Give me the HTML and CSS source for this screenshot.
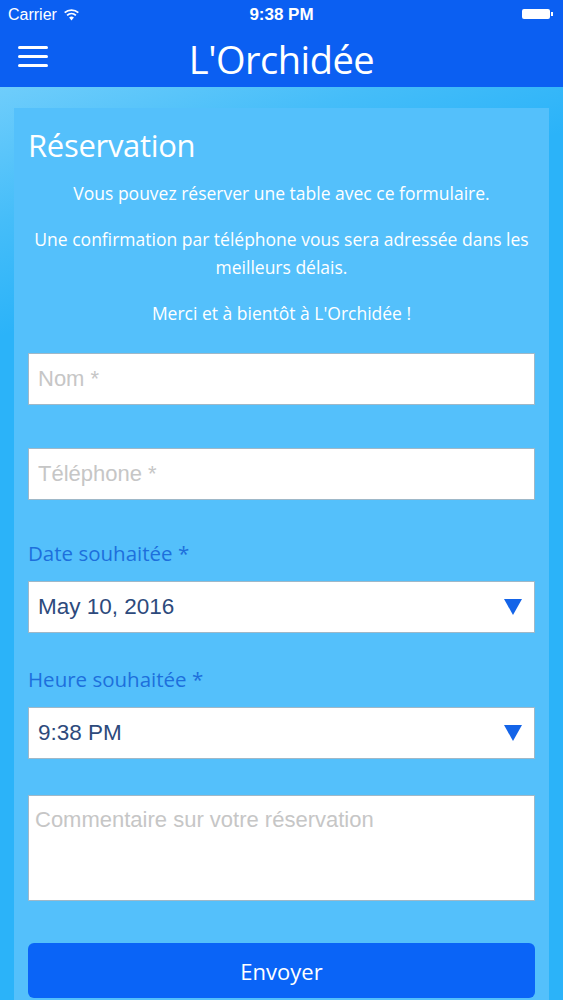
FILE: index.html
```html
<!DOCTYPE html>
<html lang="fr">
<head>
    <meta charset="UTF-8">
    <meta name="viewport" content="width=device-width, initial-scale=1.0">
    <title>L'Orchidée - Réservation</title>
    <link rel="stylesheet" href="styles.css">
</head>
<body>
    <div class="statusbar">
        <div class="carrier">
            Carrier
            <svg class="wifi" width="17" height="12" viewBox="0 0 16 12">
                <path d="M8 11.5 L5.6 8.6 A3.8 3.8 0 0 1 10.4 8.6 Z" fill="#fff"/>
                <path d="M3.6 6.4 A6.6 6.6 0 0 1 12.4 6.4" stroke="#fff" stroke-width="1.8" fill="none"/>
                <path d="M1.2 3.7 A10 10 0 0 1 14.8 3.7" stroke="#fff" stroke-width="1.8" fill="none"/>
            </svg>
        </div>
        <div class="clock">9:38 PM</div>
        <div class="battery"><span class="battery-body"></span><span class="battery-nub"></span></div>
    </div>

    <header class="topbar">
        <div class="menu">
            <span></span><span></span><span></span>
        </div>
        <h1>L'Orchidée</h1>
    </header>

    <main class="page">
        <div class="panel">
            <h2>Réservation</h2>
            <p>Vous pouvez réserver une table avec ce formulaire.</p>
            <p>Une confirmation par téléphone vous sera adressée dans les meilleurs délais.</p>
            <p>Merci et à bientôt à L'Orchidée !</p>

            <input class="field field-name" type="text" placeholder="Nom *">
            <input class="field field-phone" type="text" placeholder="Téléphone *">

            <label class="field-label">Date souhaitée *</label>
            <div class="field picker">
                <span>May 10, 2016</span>
                <svg width="18" height="16" viewBox="0 0 18 16"><path d="M0 0 H18 L9 16 Z" fill="#1464e8"/></svg>
            </div>

            <label class="field-label">Heure souhaitée *</label>
            <div class="field picker">
                <span>9:38 PM</span>
                <svg width="18" height="16" viewBox="0 0 18 16"><path d="M0 0 H18 L9 16 Z" fill="#1464e8"/></svg>
            </div>

            <textarea class="field comment" placeholder="Commentaire sur votre réservation"></textarea>

            <button class="send">Envoyer</button>
        </div>
    </main>
</body>
</html>
```

FILE: styles.css
```css
body {
    margin: 0;
    font-family: "Open Sans", sans-serif;
    background-color: #2bb3f9;
}
.statusbar {
    height: 30px;
    background-color: #0b5ff2;
    color: #fff;
    font-family: "Liberation Sans", Arial, sans-serif;
    font-size: 16px;
    display: flex;
    align-items: center;
    justify-content: space-between;
    padding: 0 10px 0 8px;
    position: relative;
}
.carrier {
    display: flex;
    align-items: center;
    gap: 6px;
}
.clock {
    position: absolute;
    left: 0;
    right: 0;
    text-align: center;
    font-size: 17px;
    font-weight: bold;
}
.battery {
    display: flex;
    align-items: center;
    margin-top: -2px;
}
.battery-body {
    width: 28px;
    height: 10px;
    background: #fff;
    border-radius: 2px;
}
.battery-nub {
    width: 2px;
    height: 4px;
    background: #fff;
    margin-left: 1px;
}
.topbar {
    height: 57px;
    background-color: #0b5ff2;
    display: flex;
    align-items: center;
    justify-content: center;
    position: relative;
}
.menu {
    position: absolute;
    left: 18px;
    top: 16px;
    display: flex;
    flex-direction: column;
    gap: 6px;
}
.menu span {
    display: block;
    width: 30px;
    height: 3px;
    border-radius: 2px;
    background: #fff;
}
.topbar h1 {
    margin: 0;
    color: #fff;
    font-weight: 400;
    font-size: 38px;
    line-height: 44px;
    letter-spacing: -0.5px;
}
.page {
    padding: 21px 14px 0;
    background: linear-gradient(160deg, #6fcdfb 0%, #45bdf9 12%, #2bb3f9 22%, #2bb3f9 100%);
}
.panel {
    background-color: #54c0fb;
    padding: 18px 14px 20px;
}
.panel h2 {
    margin: 0 0 15px;
    color: #fff;
    font-weight: 400;
    font-size: 31px;
    line-height: 38px;
    letter-spacing: -0.3px;
}
.panel p {
    margin: 0 0 18px;
    color: #fff;
    text-align: center;
    font-size: 17.5px;
    line-height: 28px;
}
.field {
    display: block;
    box-sizing: border-box;
    width: 100%;
    height: 52px;
    margin: 0;
    border: 1px solid #9fb8c8;
    background: #fff;
    font-family: "Liberation Sans", Arial, sans-serif;
    font-size: 22px;
    color: #2d4a7c;
    padding: 0 9px;
    outline: none;
}
.field::placeholder {
    color: #c6c6c6;
}
.field-name {
    margin-top: 26px;
}
.field-phone {
    margin-top: 43px;
}
.field-label {
    display: block;
    margin: 39px 0 14px;
    color: #1d6fdc;
    font-size: 20.5px;
    line-height: 28px;
}
.picker + .field-label {
    margin-top: 32px;
}
.picker {
    display: flex;
    align-items: center;
    justify-content: space-between;
    padding-right: 12px;
    font-size: 22.5px;
}
.comment {
    margin-top: 36px;
    height: 106px;
    resize: none;
    padding: 11px 6px;
}
.send {
    display: block;
    width: 100%;
    height: 55px;
    margin-top: 42px;
    border: none;
    border-radius: 6px;
    background-color: #0a64f7;
    color: #fff;
    font-family: "Open Sans", sans-serif;
    font-size: 22px;
}
```
